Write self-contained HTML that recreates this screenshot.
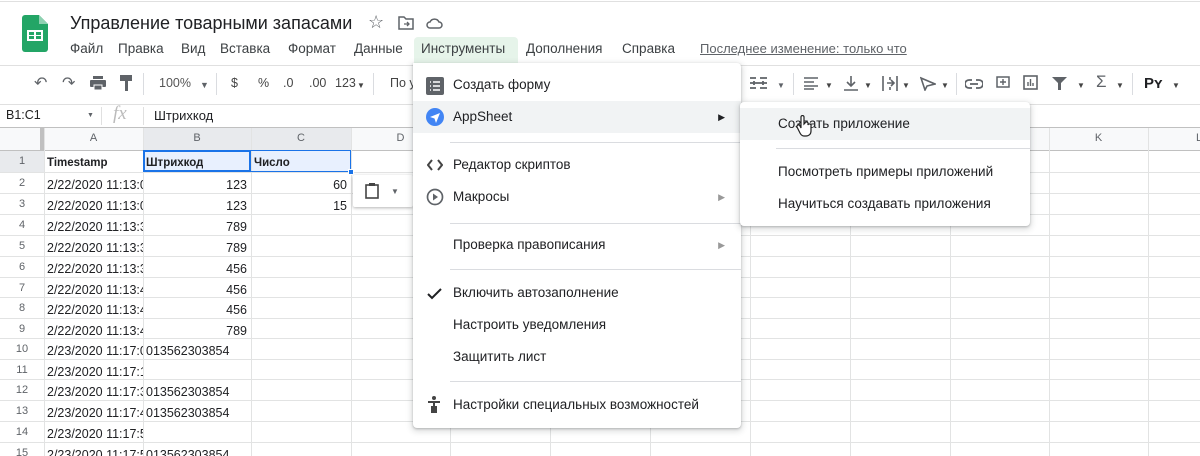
<!DOCTYPE html>
<html><head><meta charset="utf-8"><style>
*{margin:0;padding:0;box-sizing:border-box}
html,body{width:1200px;height:456px;overflow:hidden}
body{background:#fff;font-family:"Liberation Sans",Arial,sans-serif;position:relative;color:#202124}
.abs{position:absolute}
.t{font-size:13.5px;color:#3c4043;white-space:nowrap}
.mi{position:absolute;left:0;right:0;height:32px;font-size:13.5px;color:#202124;line-height:32px;padding-left:40px}
.sep{position:absolute;height:1px;background:#dadce0}
.gl{position:absolute;background:#e2e3e3}
.rh{position:absolute;left:0;width:44px;text-align:center;font-size:11px;color:#5f6368}
.cell{position:absolute;font-size:12.5px;color:#202124;white-space:nowrap;overflow:hidden}
.tb{position:absolute;top:76px;font-size:12.5px;color:#444}
</style></head><body>
<div class="abs" style="left:0;top:1px;width:1200px;height:1px;background:#e0e0e0"></div>
<svg class="abs" style="left:22px;top:15px" width="26" height="37" viewBox="0 0 26 37"><path d="M3 0h14l9 9v25a3 3 0 0 1-3 3H3a3 3 0 0 1-3-3V3a3 3 0 0 1 3-3z" fill="#23a566"/><path d="M17 0v9h9z" fill="#8ed1b1"/><rect x="5" y="15" width="16" height="11" fill="#fff"/><rect x="7" y="17" width="5" height="3" fill="#23a566"/><rect x="14" y="17" width="5" height="3" fill="#23a566"/><rect x="7" y="21" width="5" height="3" fill="#23a566"/><rect x="14" y="21" width="5" height="3" fill="#23a566"/></svg>
<div class="abs" style="left:70px;top:13px;font-size:18px;color:#202124">Управление товарными запасами</div>
<div class="abs" style="left:368px;top:12px;font-size:18px;color:#5f6368">☆</div>
<svg class="abs" style="left:398px;top:16px" width="16" height="14" viewBox="0 0 16 14"><path d="M1 1h5l2 2h7v10H1z" fill="none" stroke="#5f6368" stroke-width="1.5"/><path d="M6 8h5M9 6l2 2-2 2" stroke="#5f6368" stroke-width="1.3" fill="none"/></svg>
<svg class="abs" style="left:426px;top:17px" width="17" height="12" viewBox="0 0 17 12"><path d="M4 11a3 3 0 0 1 0-6 5 5 0 0 1 9 0 3 3 0 0 1 0 6z" fill="none" stroke="#5f6368" stroke-width="1.5"/></svg>
<div class="abs t" style="left:70px;top:41px">Файл</div>
<div class="abs t" style="left:118px;top:41px">Правка</div>
<div class="abs t" style="left:181px;top:41px">Вид</div>
<div class="abs t" style="left:220px;top:41px">Вставка</div>
<div class="abs t" style="left:288px;top:41px">Формат</div>
<div class="abs t" style="left:354px;top:41px">Данные</div>
<div class="abs" style="left:414px;top:37px;width:104px;height:26px;background:#e6f4ea;border-radius:4px 4px 0 0"></div>
<div class="abs t" style="left:421px;top:41px">Инструменты</div>
<div class="abs t" style="left:526px;top:41px">Дополнения</div>
<div class="abs t" style="left:622px;top:41px">Справка</div>
<div class="abs t" style="left:700px;top:41px;color:#5f6368;text-decoration:underline;font-size:13px">Последнее изменение: только что</div>
<div class="abs" style="left:0;top:65px;width:1200px;height:1px;background:#e0e0e0"></div>
<div class="abs" style="left:0;top:104px;width:1200px;height:1px;background:#e0e0e0"></div>
<div class="tb" style="left:34px;font-size:16px;top:73px;color:#5f6368">↶</div>
<div class="tb" style="left:62px;font-size:16px;top:73px;color:#5f6368">↷</div>
<svg class="abs" style="left:90px;top:76px" width="16" height="14"><rect x="0" y="4" width="16" height="7" rx="1" fill="#5f6368"/><rect x="3" y="0" width="10" height="3" fill="#5f6368"/><rect x="4" y="9" width="8" height="5" fill="#5f6368" stroke="#fff"/></svg>
<svg class="abs" style="left:120px;top:75px" width="12" height="16"><rect x="0" y="0" width="12" height="6" fill="#5f6368"/><rect x="5" y="6" width="3" height="10" fill="#5f6368"/></svg>
<div class="abs" style="left:143px;top:73px;width:1px;height:22px;background:#dadce0"></div>
<div class="tb" style="left:159px;color:#555">100%</div><div class="tb" style="left:200px;font-size:9px;top:80px;color:#5f6368">▼</div>
<div class="abs" style="left:216px;top:73px;width:1px;height:22px;background:#dadce0"></div>
<div class="tb" style="left:231px">$</div><div class="tb" style="left:258px">%</div><div class="tb" style="left:283px">.0</div><div class="tb" style="left:309px">.00</div><div class="tb" style="left:335px">123</div><div class="tb" style="left:357px;font-size:8px;top:81px">▼</div>
<div class="abs" style="left:373px;top:73px;width:1px;height:22px;background:#dadce0"></div>
<div class="tb" style="left:390px">По у</div>
<svg class="abs" style="left:750px;top:77px" width="17" height="13"><path d="M0 1h6M10 1h7M0 6h17M0 11h6M10 11h7M4 4v4M13 4v4" stroke="#5f6368" stroke-width="1.8"/></svg><div class="tb" style="left:777px;font-size:8px;top:81px;color:#5f6368">▼</div>
<div class="abs" style="left:793px;top:73px;width:1px;height:22px;background:#dadce0"></div>
<svg class="abs" style="left:804px;top:77px" width="14" height="13"><path d="M0 1h14M0 5h10M0 9h14M0 12h10" stroke="#5f6368" stroke-width="1.6"/></svg><div class="tb" style="left:825px;font-size:8px;top:81px">▼</div>
<svg class="abs" style="left:844px;top:76px" width="14" height="15"><path d="M7 0v10M3 6l4 4 4-4M0 14h14" stroke="#5f6368" stroke-width="1.6" fill="none"/></svg><div class="tb" style="left:864px;font-size:8px;top:81px">▼</div>
<svg class="abs" style="left:882px;top:76px" width="16" height="15"><path d="M1 0v15M15 0v15M5 7h7M9 4l3 3-3 3M8 1v3M8 11v3" stroke="#5f6368" stroke-width="1.6" fill="none"/></svg><div class="tb" style="left:902px;font-size:8px;top:81px">▼</div>
<svg class="abs" style="left:920px;top:76px" width="16" height="15"><path d="M1 2l14 6-8 2-2 4z" stroke="#5f6368" stroke-width="1.6" fill="none"/></svg><div class="tb" style="left:941px;font-size:8px;top:81px">▼</div>
<div class="abs" style="left:956px;top:73px;width:1px;height:22px;background:#dadce0"></div>
<svg class="abs" style="left:965px;top:79px" width="18" height="10"><path d="M7 1H4a4 4 0 0 0 0 8h3M11 1h3a4 4 0 0 1 0 8h-3M5 5h8" stroke="#5f6368" stroke-width="1.8" fill="none"/></svg>
<svg class="abs" style="left:996px;top:76px" width="14" height="14"><rect x="1" y="1" width="12" height="10" fill="none" stroke="#5f6368" stroke-width="1.5"/><path d="M7 3v6M4 6h6" stroke="#5f6368" stroke-width="1.4"/></svg>
<svg class="abs" style="left:1023px;top:75px" width="15" height="15"><rect x="1" y="1" width="13" height="13" fill="none" stroke="#5f6368" stroke-width="1.6"/><path d="M5 11V7M7.5 11V4M10 11V8" stroke="#5f6368" stroke-width="1.4"/></svg>
<svg class="abs" style="left:1052px;top:77px" width="15" height="13"><path d="M0 0h15l-6 6v7H6V6z" fill="#5f6368"/></svg><div class="tb" style="left:1077px;font-size:8px;top:81px">▼</div>
<div class="tb" style="left:1096px;font-size:17px;top:72px;color:#5f6368">Σ</div><div class="tb" style="left:1116px;font-size:8px;top:81px">▼</div>
<div class="abs" style="left:1132px;top:73px;width:1px;height:22px;background:#dadce0"></div>
<div class="tb" style="left:1144px;font-size:15px;font-weight:bold;top:75px;color:#202124">Pʏ</div><div class="tb" style="left:1172px;font-size:8px;top:81px">▼</div>
<div class="abs" style="left:6px;top:108px;font-size:12.5px;color:#222">B1:C1</div>
<div class="abs" style="left:87px;top:112px;font-size:7px;color:#5f6368">▼</div>
<div class="abs" style="left:101px;top:107px;width:1px;height:18px;background:#e0e0e0"></div>
<div class="abs" style="left:113px;top:103px;font-size:19px;font-style:italic;color:#bbb;font-family:'Liberation Serif',serif">fx</div>
<div class="abs" style="left:143px;top:107px;width:1px;height:18px;background:#e0e0e0"></div>
<div class="abs" style="left:154px;top:108px;font-size:13px;color:#202124">Штрихкод</div>
<div class="abs" style="left:0;top:127px;width:1200px;height:1px;background:#c0c0c0"></div>
<div class="abs" style="left:0;top:128px;width:1200px;height:22px;background:#f8f9fa"></div>
<div class="abs" style="left:143px;top:128px;width:208px;height:22px;background:#e8eaed"></div>
<div class="abs" style="left:0;top:150px;width:44px;height:22px;background:#e8eaed"></div>
<div class="abs" style="left:40px;top:128px;width:4px;height:22px;background:#c0c0c0"></div>
<div class="abs" style="left:0;top:150px;width:1200px;height:1px;background:#c0c0c0"></div>
<div class="abs" style="left:44px;top:128px;width:1px;height:330px;background:#c0c0c0"></div>
<div class="abs" style="left:143px;top:150px;width:208px;height:22px;background:#e8f0fe"></div>
<div id="g"></div>
<div class="abs" style="left:143px;top:150px;width:108px;height:22px;border:2px solid #1a73e8"></div>
<div class="abs" style="left:143px;top:150px;width:208px;height:22px;border:1px solid #1a73e8"></div>
<div class="cell" style="left:146px;top:157px;font-weight:bold;font-size:11.5px">Штрихкод</div>
<div class="cell" style="left:254px;top:157px;font-weight:bold;font-size:11.5px">Число</div>
<div class="abs" style="left:348px;top:169px;width:6px;height:6px;background:#1a73e8;border:1px solid #fff"></div>
<div class="abs" style="left:353px;top:175px;width:60px;height:32px;background:#fff;box-shadow:0 1px 3px rgba(0,0,0,.3);border-radius:2px"></div>
<svg class="abs" style="left:365px;top:182px" width="14" height="17"><rect x="1" y="3" width="12" height="13" fill="none" stroke="#444" stroke-width="1.6"/><rect x="4" y="1" width="6" height="3" fill="#444"/></svg>
<div class="abs" style="left:391px;top:187px;font-size:8px;color:#5f6368">▼</div>
<div class="abs" style="left:413px;top:63px;width:328px;height:365px;background:#fff;border-radius:0 4px 4px 4px;box-shadow:0 2px 6px 2px rgba(60,64,67,.15),0 1px 2px rgba(60,64,67,.3)">
<div class="mi" style="top:6px">Создать форму</div>
<svg class="abs" style="left:13px;top:14px" width="18" height="18"><rect width="18" height="18" rx="2" fill="#5f6368"/><path d="M4 5h1M7 5h7M4 9h1M7 9h7M4 13h1M7 13h7" stroke="#fff" stroke-width="1.6"/></svg>
<div class="mi" style="top:38px;background:#f1f3f4">AppSheet<span style="position:absolute;right:16px;font-size:9px;color:#202124">▶</span></div>
<svg class="abs" style="left:13px;top:45px" width="18" height="18"><circle cx="9" cy="9" r="9" fill="#4285f4"/><path d="M4 9l10-4-4 10-1.5-4.5z" fill="#fff"/></svg>
<div class="sep" style="left:37px;right:0;top:79px"></div>
<div class="mi" style="top:86px">Редактор скриптов</div>
<svg class="abs" style="left:14px;top:96px" width="16" height="12"><path d="M5 1L1 6l4 5M11 1l4 5-4 5" stroke="#444" stroke-width="2" fill="none"/></svg>
<div class="mi" style="top:118px">Макросы<span style="position:absolute;right:16px;font-size:9px;color:#999">▶</span></div>
<svg class="abs" style="left:13px;top:125px" width="18" height="18"><circle cx="9" cy="9" r="7.5" fill="none" stroke="#5f6368" stroke-width="1.7"/><path d="M7 5.5v7l5-3.5z" fill="#5f6368"/></svg>
<div class="sep" style="left:37px;right:0;top:160px"></div>
<div class="mi" style="top:166px">Проверка правописания<span style="position:absolute;right:16px;font-size:9px;color:#999">▶</span></div>
<div class="sep" style="left:37px;right:0;top:206px"></div>
<div class="mi" style="top:214px">Включить автозаполнение</div>
<svg class="abs" style="left:14px;top:225px" width="15" height="12"><path d="M1 6l4 4 9-9" stroke="#202124" stroke-width="2" fill="none"/></svg>
<div class="mi" style="top:246px">Настроить уведомления</div>
<div class="mi" style="top:278px">Защитить лист</div>
<div class="sep" style="left:37px;right:0;top:318px"></div>
<div class="mi" style="top:326px">Настройки специальных возможностей</div>
<svg class="abs" style="left:14px;top:333px" width="14" height="18"><circle cx="7" cy="2" r="2" fill="#444"/><path d="M1 6h12M7 6v11M5 10v7M9 10v7" stroke="#444" stroke-width="2"/></svg>
</div>
<div class="abs" style="left:740px;top:102px;width:290px;height:124px;background:#fff;border-radius:4px;box-shadow:0 2px 6px 2px rgba(60,64,67,.15),0 1px 2px rgba(60,64,67,.3)">
<div class="mi" style="top:6px;background:#f1f3f4;padding-left:38px">Создать приложение</div>
<div class="sep" style="left:36px;right:0;top:46px"></div>
<div class="mi" style="top:54px;padding-left:38px">Посмотреть примеры приложений</div>
<div class="mi" style="top:86px;padding-left:38px">Научиться создавать приложения</div>
</div>
<svg class="abs" style="left:796px;top:115px" width="18" height="22" viewBox="0 0 18 22"><path d="M5 2a1.5 1.5 0 0 1 3 0v7l1-1a1.5 1.5 0 0 1 3 1v1a1.5 1.5 0 0 1 3 1v5c0 3-2 5-5 5H8c-2 0-3-1-4-3L1 12a1.5 1.5 0 0 1 3-1l1 2z" fill="#fff" stroke="#222" stroke-width="1.2"/></svg>
<script>
var g=document.getElementById('g'),h='';
var cols=[44,143,251,351,450,550,650,750,850,950,1049,1148];
var names='ABCDEFGHIJKL';
for(var i=0;i<cols.length;i++){h+='<div class="gl" style="left:'+cols[i]+'px;top:128px;width:1px;height:330px"></div>';
 var w=(cols[i+1]||1250)-cols[i];h+='<div class="abs" style="left:'+cols[i]+'px;top:132px;width:'+w+'px;text-align:center;font-size:11px;color:#5f6368">'+names[i]+'</div>';}
var tops=[150,172,193,214,235,256,277,297,318,338,359,379,400,421,442,462];
var A=['Timestamp','2/22/2020 11:13:0','2/22/2020 11:13:0','2/22/2020 11:13:3','2/22/2020 11:13:3','2/22/2020 11:13:3','2/22/2020 11:13:4','2/22/2020 11:13:4','2/22/2020 11:13:4','2/23/2020 11:17:0','2/23/2020 11:17:1','2/23/2020 11:17:3','2/23/2020 11:17:4','2/23/2020 11:17:5','2/23/2020 11:17:5'];
var B=['','123','123','789','789','456','456','456','789','013562303854','','013562303854','013562303854','','013562303854'];
var C=['','60','15'];
for(var r=0;r<15;r++){var t=tops[r];
 h+='<div class="gl" style="left:0;top:'+(tops[r+1])+'px;width:1200px;height:1px"></div>';
 h+='<div class="rh" style="top:'+(t+5)+'px">'+(r+1)+'</div>';
 var fw=r==0?'font-weight:bold;font-size:11.5px;':'';
 var ty=r==0?t+7:t+6;
 h+='<div class="cell" style="left:47px;top:'+ty+'px;width:96px;'+fw+'">'+A[r]+'</div>';
 if(B[r]){var num=/^\d{3}$/.test(B[r]);h+='<div class="cell" style="left:'+(num?143:146)+'px;top:'+ty+'px;width:'+(num?104:105)+'px;'+(num?'text-align:right;':'')+'">'+B[r]+'</div>';}
 if(C[r])h+='<div class="cell" style="left:251px;top:'+ty+'px;width:96px;text-align:right">'+C[r]+'</div>';
}
g.innerHTML=h;
</script>
</body></html>
